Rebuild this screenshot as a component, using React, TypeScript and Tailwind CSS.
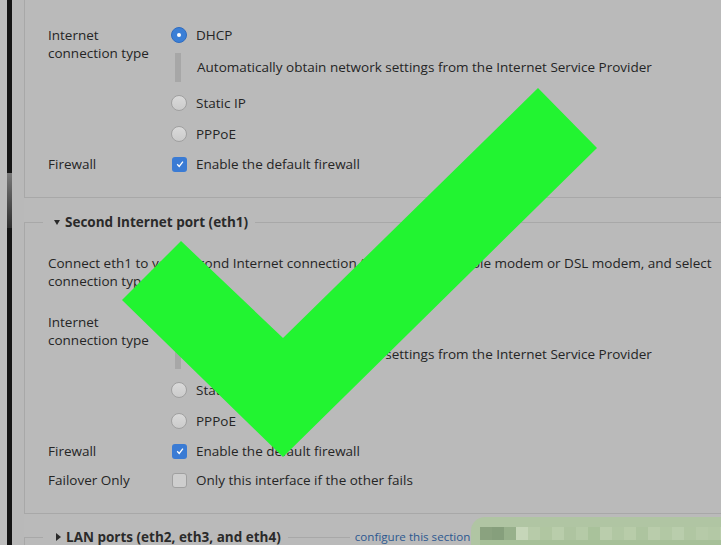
import type { ReactNode } from "react";

function Radio({ checked }: { checked?: boolean }) {
	return checked ? (
		<span className="flex h-4 w-4 shrink-0 items-center justify-center rounded-full border border-[#2f6cc0] bg-[#3b7fd6]">
			<span className="h-[4px] w-[4px] rounded-full bg-white" />
		</span>
	) : (
		<span className="h-4 w-4 shrink-0 rounded-full border border-[#a0a0a0] bg-linear-to-b from-[#dadada] to-[#cbcbcb]" />
	);
}

function Checkbox({ checked }: { checked?: boolean }) {
	return checked ? (
		<span className="flex h-[15px] w-[15px] shrink-0 items-center justify-center rounded-[3px] bg-[#3a7bd4]">
			<svg viewBox="0 0 10 10" className="h-[10px] w-[10px]">
				<path d="M2.2 5.3 L4.2 7.4 L7.9 2.6" fill="none" stroke="white" strokeWidth="1.3" />
			</svg>
		</span>
	) : (
		<span className="h-[15px] w-[15px] shrink-0 rounded-[3px] border border-[#a0a0a0] bg-[#cecece]" />
	);
}

function Option({ label, className = "", checked }: { label: string; className?: string; checked?: boolean }) {
	return (
		<div className={`flex h-[18px] items-center gap-[9px] ${className}`}>
			<Radio checked={checked} />
			<span>{label}</span>
		</div>
	);
}

function Toggle({ label, className = "", checked }: { label: string; className?: string; checked?: boolean }) {
	return (
		<div className={`flex h-[18px] items-center gap-[9px] pl-px ${className}`}>
			<Checkbox checked={checked} />
			<span>{label}</span>
		</div>
	);
}

function Legend({ title, open, children }: { title: string; open?: boolean; children?: ReactNode }) {
	return (
		<div className="flex h-[18px]">
			<div className="mt-[9px] w-[19px] border-l border-t border-[#a8a8a8]" />
			<div className="flex items-center pl-[11px] pr-[7px]">
				{open ? (
					<span className="mr-[5px] h-0 w-0 border-x-[3.5px] border-t-[5px] border-x-transparent border-t-[#2a2a2a]" />
				) : (
					<span className="ml-[2px] mr-[5px] h-0 w-0 border-y-[4px] border-l-[5px] border-y-transparent border-l-[#2a2a2a]" />
				)}
				<span className="font-bold text-[#2a2a2a]">{title}</span>
			</div>
			{children}
			<div className="mt-[9px] flex-1 border-t border-[#a8a8a8]" />
		</div>
	);
}

function ConnectionRows({ failover }: { failover?: boolean }) {
	return (
		<div className="grid grid-cols-[123px_1fr]">
			<div className="leading-[18px]">
				Internet
				<br />
				connection type
			</div>
			<div>
				<Option label="DHCP" checked />
				<div className="mt-[9px] flex h-[29px] items-center">
					<span className="ml-[4px] h-full w-[6px] bg-[#a7a7a7]" />
					<span className="ml-[16px] whitespace-nowrap">
						Automatically obtain network settings from the Internet Service Provider
					</span>
				</div>
				<Option label="Static IP" className="mt-[12px]" />
				<Option label="PPPoE" className="mt-[13px]" />
			</div>
			<div className="mt-[12px] leading-[18px]">Firewall</div>
			<Toggle label="Enable the default firewall" className="mt-[12px]" checked />
			{failover && (
				<>
					<div className="mt-[11px] leading-[18px]">Failover Only</div>
					<Toggle label="Only this interface if the other fails" className="mt-[11px]" />
				</>
			)}
		</div>
	);
}

const blurCells = [
	"#8aa27f", "#869f7c", "#97b08b", "#c6d6b9", "#b7cba9", "#b0c6a1", "#b9cdab", "#aec4a0",
	"#b5caa7", "#a9c29b", "#bacdac", "#b1c7a3", "#b8cca9", "#adc49f", "#b9ccab", "#b2c8a4",
	"#b9cdac", "#b0c6a2", "#b6caa8", "#b3c8a5", "#b9ccab",
];

export default function App() {
	return (
		<div className="relative flex h-[545px] w-[721px] overflow-hidden bg-[#bababa] font-['Open_Sans',sans-serif] text-[13.5px] text-[#252525]">
			<div className="w-[7px] shrink-0 bg-[#bdbdbd]" />
			<div className="flex w-[5px] shrink-0 flex-col bg-[#151515]">
				<div className="h-[173px]" />
				<div className="h-[55px] bg-linear-to-b from-[#7a7a7a] to-[#2e2e2e]" />
			</div>
			<div className="w-[12px] shrink-0 bg-[#b9b9b9]" />

			<main className="flex min-w-[760px] flex-col">
				<section className="border-b border-l border-[#a8a8a8] pb-[24px] pl-[23px] pt-[26px]">
					<ConnectionRows />
				</section>

				<section className="mt-[15px]">
					<Legend title="Second Internet port (eth1)" open />
					<div className="border-b border-l border-[#a8a8a8] pb-[24px] pl-[23px] pt-[23px]">
						<p className="whitespace-nowrap leading-[18px]">
							Connect eth1 to your second Internet connection (for example, a cable modem or DSL modem, and select
							<br />
							connection type.
						</p>
						<div className="mt-[23px]">
							<ConnectionRows failover />
						</div>
					</div>
				</section>

				<section className="mt-[14px]">
					<Legend title="LAN ports (eth2, eth3, and eth4)">
						<div className="mt-[9px] w-[62px] border-t border-[#a8a8a8]" />
						<span className="flex items-center pl-[5px] pr-[6px] text-[11.6px] text-[#2c5890]">configure this section</span>
					</Legend>
				</section>
			</main>

			{/* pixelated watermark */}
			<div className="absolute bottom-0 left-[471px] right-0 top-[517px] flex flex-col rounded-tl-[14px] bg-[#b0c5a3] pl-[9px] pt-[10px]">
				<div className="flex h-[13px]">
					{blurCells.map((c, i) => (
						<span key={i} className="h-full w-[12px] shrink-0" style={{ backgroundColor: c }} />
					))}
				</div>
				<div className="flex-1 bg-[#a7c099]" />
			</div>

			{/* big check mark */}
			<svg className="absolute left-0 top-0" width="721" height="545" viewBox="0 0 721 545">
				<polygon points="122,300 181,241 283,338 538,88 597,148 283,457" fill="#22f431" />
			</svg>
		</div>
	);
}
